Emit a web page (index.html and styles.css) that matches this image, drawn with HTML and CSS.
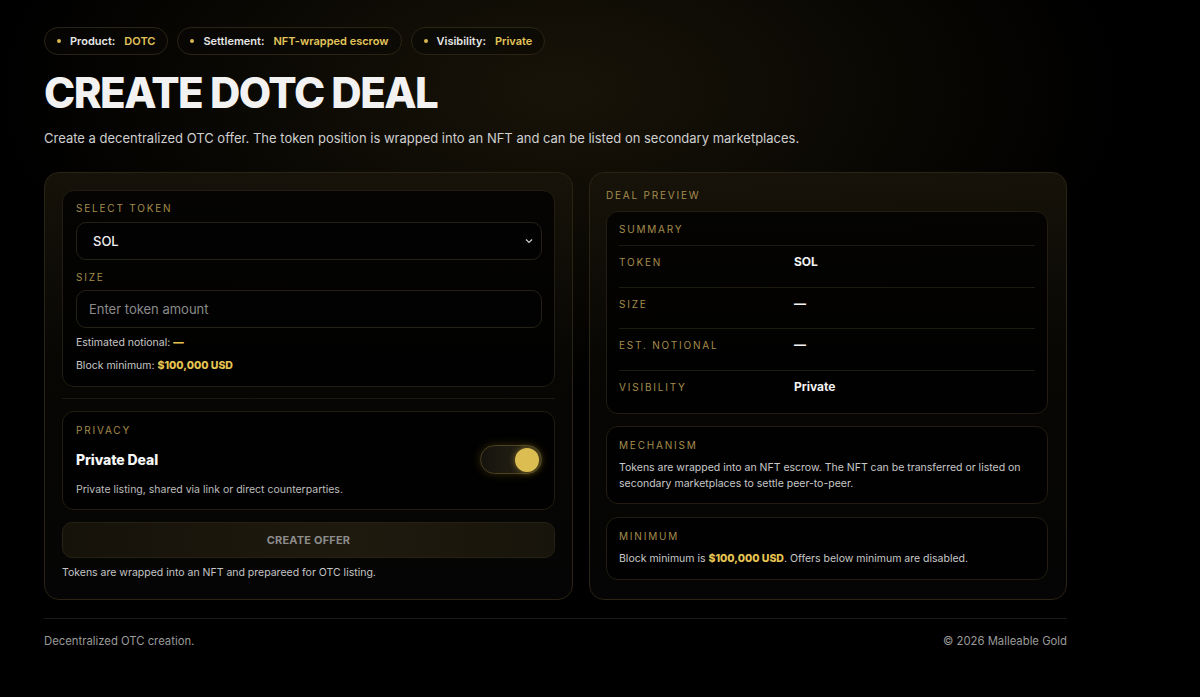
FILE: index.html
```html
<!DOCTYPE html>
<html lang="en">
<head>
<meta charset="utf-8">
<title>Create DOTC Deal</title>
<link rel="stylesheet" href="styles.css">
</head>
<body>
<div class="page">
  <div class="chips">
    <div class="chip"><span class="dot"></span><span class="chip-k">Product:</span><span class="chip-v">DOTC</span></div>
    <div class="chip"><span class="dot"></span><span class="chip-k">Settlement:</span><span class="chip-v">NFT-wrapped escrow</span></div>
    <div class="chip"><span class="dot"></span><span class="chip-k">Visibility:</span><span class="chip-v">Private</span></div>
  </div>
  <h1 class="title">CREATE DOTC DEAL</h1>
  <p class="subtitle">Create a decentralized OTC offer. The token position is wrapped into an NFT and can be listed on secondary marketplaces.</p>

  <div class="grid">
    <section class="card">
      <div class="box token-box">
        <div class="label">SELECT TOKEN</div>
        <div class="field select">
          <span class="select-val">SOL</span>
          <svg class="chev" width="8" height="6" viewBox="0 0 8 6"><path d="M1 1.5 L4 4.5 L7 1.5" fill="none" stroke="#cfcfcf" stroke-width="1.2"/></svg>
        </div>
        <div class="label mt">SIZE</div>
        <div class="field input"><span class="placeholder">Enter token amount</span></div>
        <div class="note first">Estimated notional: <b class="gold">—</b></div>
        <div class="note">Block minimum: <b class="gold">$100,000 USD</b></div>
      </div>
      <div class="divider"></div>
      <div class="box privacy">
        <div class="label">PRIVACY</div>
        <div class="priv-row">
          <div class="priv-title">Private Deal</div>
          <div class="toggle"><span class="knob"></span></div>
        </div>
        <div class="priv-desc">Private listing, shared via link or direct counterparties.</div>
      </div>
      <button class="btn">CREATE OFFER</button>
      <div class="foot-note">Tokens are wrapped into an NFT and prepareed for OTC listing.</div>
    </section>

    <section class="card preview">
      <div class="label">DEAL PREVIEW</div>
      <div class="box summary">
        <div class="label">SUMMARY</div>
        <div class="row"><span class="label">TOKEN</span><span class="val">SOL</span></div>
        <div class="row"><span class="label">SIZE</span><span class="val">—</span></div>
        <div class="row"><span class="label">EST. NOTIONAL</span><span class="val">—</span></div>
        <div class="row"><span class="label">VISIBILITY</span><span class="val">Private</span></div>
      </div>
      <div class="box info">
        <div class="label">MECHANISM</div>
        <p class="info-text">Tokens are wrapped into an NFT escrow. The NFT can be transferred or listed on secondary marketplaces to settle peer-to-peer.</p>
      </div>
      <div class="box info">
        <div class="label">MINIMUM</div>
        <p class="info-text">Block minimum is <b class="gold">$100,000 USD</b>. Offers below minimum are disabled.</p>
      </div>
    </section>
  </div>

  <footer class="footer">
    <span>Decentralized OTC creation.</span>
    <span>© 2026 Malleable Gold</span>
  </footer>
</div>
</body>
</html>
```

FILE: styles.css
```css
* { box-sizing: border-box; }
html, body { margin: 0; padding: 0; }
body {
  background: #000;
  background-image: radial-gradient(ellipse 560px 300px at 560px 90px, rgba(32, 26, 11, 0.75), rgba(0,0,0,0) 100%);
  background-repeat: no-repeat;
  min-height: 697px;
  font-family: Inter, "Noto Sans", sans-serif;
  color: #e8e8e8;
}
.page {
  width: 1023px;
  margin-left: 44px;
  padding-top: 27px;
}
.chips { display: flex; gap: 9px; }
.chip {
  display: flex;
  align-items: center;
  height: 28px;
  padding: 0 12px 0 12px;
  border: 1px solid #2a2414;
  border-radius: 14px;
  background: rgba(10, 9, 5, 0.6);
  font-size: 11px;
  font-weight: 600;
}
.dot {
  width: 4px; height: 4px; border-radius: 50%;
  background: #d7b84e;
  margin-right: 9px;
}
.chip-k { color: #e6e6e6; margin-right: 9px; }
.chip-v { color: #e2c55a; }
.title {
  margin: 13px 0 0 0;
  font-size: 42px;
  font-weight: 800;
  letter-spacing: -1.5px;
  line-height: 50px;
  color: #f2f2f2;
}
.subtitle {
  margin: 10px 0 0 0;
  font-size: 13px;
  color: #cfcfcf;
  line-height: 20px;
}
.grid {
  display: grid;
  grid-template-columns: 529px 478px;
  gap: 16px;
  margin-top: 24px;
}
.card {
  border: 1px solid #2a2414;
  border-radius: 15px;
  background: linear-gradient(180deg, rgba(24, 20, 10, 0.9) 0%, rgba(8, 7, 4, 0.9) 45%, #050505 100%);
  padding: 17px 17px 19px 17px;
  display: flex;
  flex-direction: column;
}
.box {
  border: 1px solid #221d10;
  border-radius: 12px;
  background: rgba(0, 0, 0, 0.75);
  padding: 11px 12px 12px 13px;
}
.label {
  font-size: 10px;
  letter-spacing: 1.8px;
  color: #a58c4c;
  line-height: 13px;
  text-transform: uppercase;
}
.token-box { padding-bottom: 13px; }
.label.mt { margin-top: 11px; }
.field {
  margin-top: 7px;
  height: 38px;
  border: 1px solid #262115;
  border-radius: 10px;
  background: #020202;
  display: flex;
  align-items: center;
}
.token-box .field.input { margin-top: 6px; }
.select { padding: 0 8px 0 16px; justify-content: space-between; }
.select-val { font-size: 13px; color: #f0f0f0; font-weight: 500; }
.input { padding: 0 12px; }
.placeholder { font-size: 13px; color: #8a8a8a; }
.note { font-size: 10.5px; color: #c8c8c8; margin-top: 9px; line-height: 14px; }
.note.first { margin-top: 8px; }
.gold { color: #e6c452; font-weight: 800; }
.divider { height: 1px; background: #1c1810; margin: 11px 0 12px 0; }
.privacy { padding: 12px 12px 12px 13px; }
.priv-row { display: flex; justify-content: space-between; align-items: center; margin-top: 8px; }
.priv-title { font-size: 14px; font-weight: 800; color: #f5f5f5; letter-spacing: -0.1px; }
.toggle {
  width: 62px; height: 29px;
  border-radius: 15px;
  border: 1px solid #4d4220;
  background: linear-gradient(90deg, #15130d 0%, #2a2618 100%);
  box-shadow: 0 0 10px rgba(200, 160, 40, 0.25);
  display: flex; align-items: center; justify-content: flex-end;
  padding-right: 2px;
}
.knob {
  width: 24px; height: 24px; border-radius: 50%;
  background: #dcbd52;
  box-shadow: 0 0 6px rgba(220, 180, 60, 0.5);
}
.priv-desc { font-size: 10.5px; color: #bdbdbd; margin-top: 9px; line-height: 14px; }
.btn {
  margin-top: 12px;
  height: 36px;
  border: 1px solid #262112;
  border-radius: 10px;
  background: linear-gradient(90deg, #15120a 0%, #1f1a0e 60%, #17140b 100%);
  color: #8c8c8c;
  font-family: Inter, "Noto Sans", sans-serif;
  font-size: 11px;
  font-weight: 700;
  letter-spacing: 0.2px;
}
.foot-note { font-size: 10.5px; color: #c4c4c4; margin-top: 8px; line-height: 14px; }
.preview { padding: 16px 18px 18px 16px; }
.summary { margin-top: 9px; padding: 11px 12px 2px 12px; }
.summary > .label:first-child { margin-bottom: 9px; }
.row {
  display: grid;
  grid-template-columns: 175px 1fr;
  align-items: start;
  height: 41.5px;
  padding-top: 9px;
  border-top: 1px solid #1d1a12;
}
.row .label { line-height: 14px; }
.val { font-size: 12px; font-weight: 700; color: #f3f3f3; line-height: 14px; }
.info { margin-top: 12px; padding: 12px 12px 11px 12px; }
.info-text { margin: 8px 0 0 0; font-size: 10.5px; color: #c8c8c8; line-height: 16px; }
.info:last-child { margin-top: 13px; padding-bottom: 12px; }
.footer {
  margin-top: 18px;
  border-top: 1px solid #1a1a1a;
  padding-top: 15px;
  display: flex;
  justify-content: space-between;
  font-size: 11.3px;
  color: #9a9a9a;
}
```
